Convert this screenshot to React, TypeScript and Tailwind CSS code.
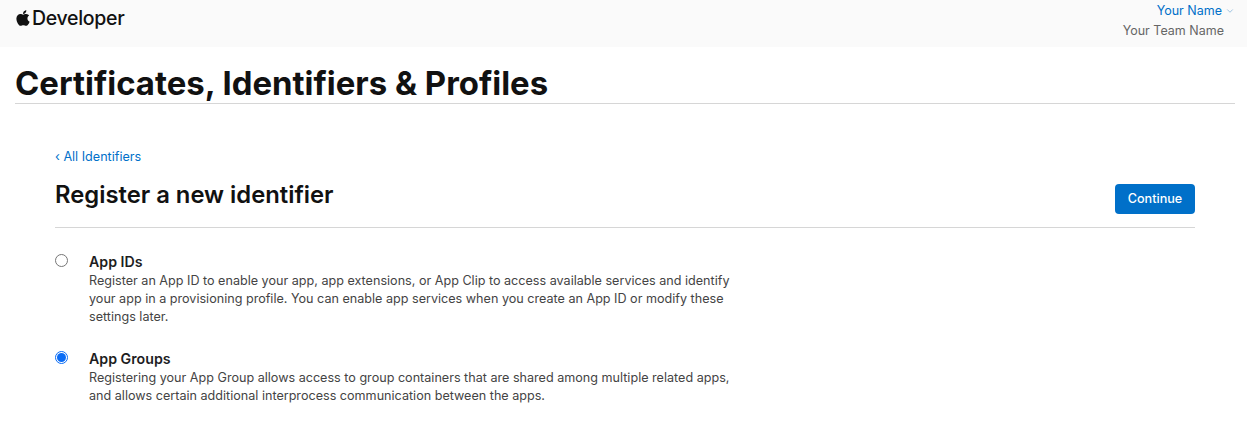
import { FaApple } from 'react-icons/fa';
import { ChevronDown } from 'lucide-react';

const font = { fontFamily: 'Inter, "Liberation Sans", sans-serif' };

function Radio({ checked }: { checked?: boolean }) {
  return checked ? (
    <span className="mt-[2px] flex h-[13px] w-[13px] items-center justify-center rounded-full border border-[#0a6cf5] bg-white">
      <span className="block h-[9px] w-[9px] rounded-full bg-[#0a6cf5]" />
    </span>
  ) : (
    <span className="mt-[2px] block h-[13px] w-[13px] rounded-full border border-[#767676] bg-white" />
  );
}

function Option({ title, text, checked }: { title: string; text: string[]; checked?: boolean }) {
  return (
    <div className="flex">
      <div className="w-[34px] shrink-0">
        <Radio checked={checked} />
      </div>
      <div>
        <p className="mb-[1px] text-[14.2px] leading-[19px] font-semibold text-[#1d1d1f]">{title}</p>
        {text.map((line) => (
          <p key={line} className="text-[12.6px] leading-[18px] whitespace-nowrap text-[#444]">
            {line}
          </p>
        ))}
      </div>
    </div>
  );
}

export default function App() {
  return (
    <div className="h-[425px] overflow-hidden bg-white" style={font}>
      <header className="flex h-[47px] items-start justify-between bg-[#fafafa] pr-[12px] pl-[16px]">
        <div className="flex items-center pt-[6px] text-[#111]">
          <FaApple size={18} className="-ml-[2px]" />
          <span className="text-[19.5px] leading-[24px] font-medium tracking-[-0.3px]">Developer</span>
        </div>
        <div className="flex flex-col items-end pt-[1px] text-[12.5px] leading-[20px]">
          <span className="flex items-center gap-[3px] text-[#0070c9]">
            Your Name
            <ChevronDown size={10} className="text-[#8bb8dc]" />
          </span>
          <span className="pr-[11px] text-[#666]">Your Team Name</span>
        </div>
      </header>

      <div className="mx-[15px] mt-[15px] h-[42px] w-[1220px] border-b border-[#d6d6d6]">
        <h1 className="text-[32.9px] leading-[42px] font-bold whitespace-nowrap text-[#111]">
          Certificates, Identifiers &amp; Profiles
        </h1>
      </div>

      <main className="mr-[52px] ml-[55px] pt-[44px]">
        <a className="block text-[12.6px] leading-[18px] text-[#0070c9]">‹ All Identifiers</a>
        <div className="mt-[12px] flex h-[50px] items-start justify-between border-b border-[#d6d6d6]">
          <h2 className="mt-[3px] text-[23.8px] leading-[28px] font-semibold text-[#111]">
            Register a new identifier
          </h2>
          <button
            type="button"
            className="mt-[6px] h-[30px] w-[80px] rounded-[4px] bg-[#0070c9] text-[12.6px] font-medium text-white"
          >
            Continue
          </button>
        </div>
        <div className="mt-[24px] flex flex-col gap-[23px]">
          <Option
            title="App IDs"
            text={[
              'Register an App ID to enable your app, app extensions, or App Clip to access available services and identify',
              'your app in a provisioning profile. You can enable app services when you create an App ID or modify these',
              'settings later.',
            ]}
          />
          <Option
            checked
            title="App Groups"
            text={[
              'Registering your App Group allows access to group containers that are shared among multiple related apps,',
              'and allows certain additional interprocess communication between the apps.',
            ]}
          />
        </div>
      </main>
    </div>
  );
}
